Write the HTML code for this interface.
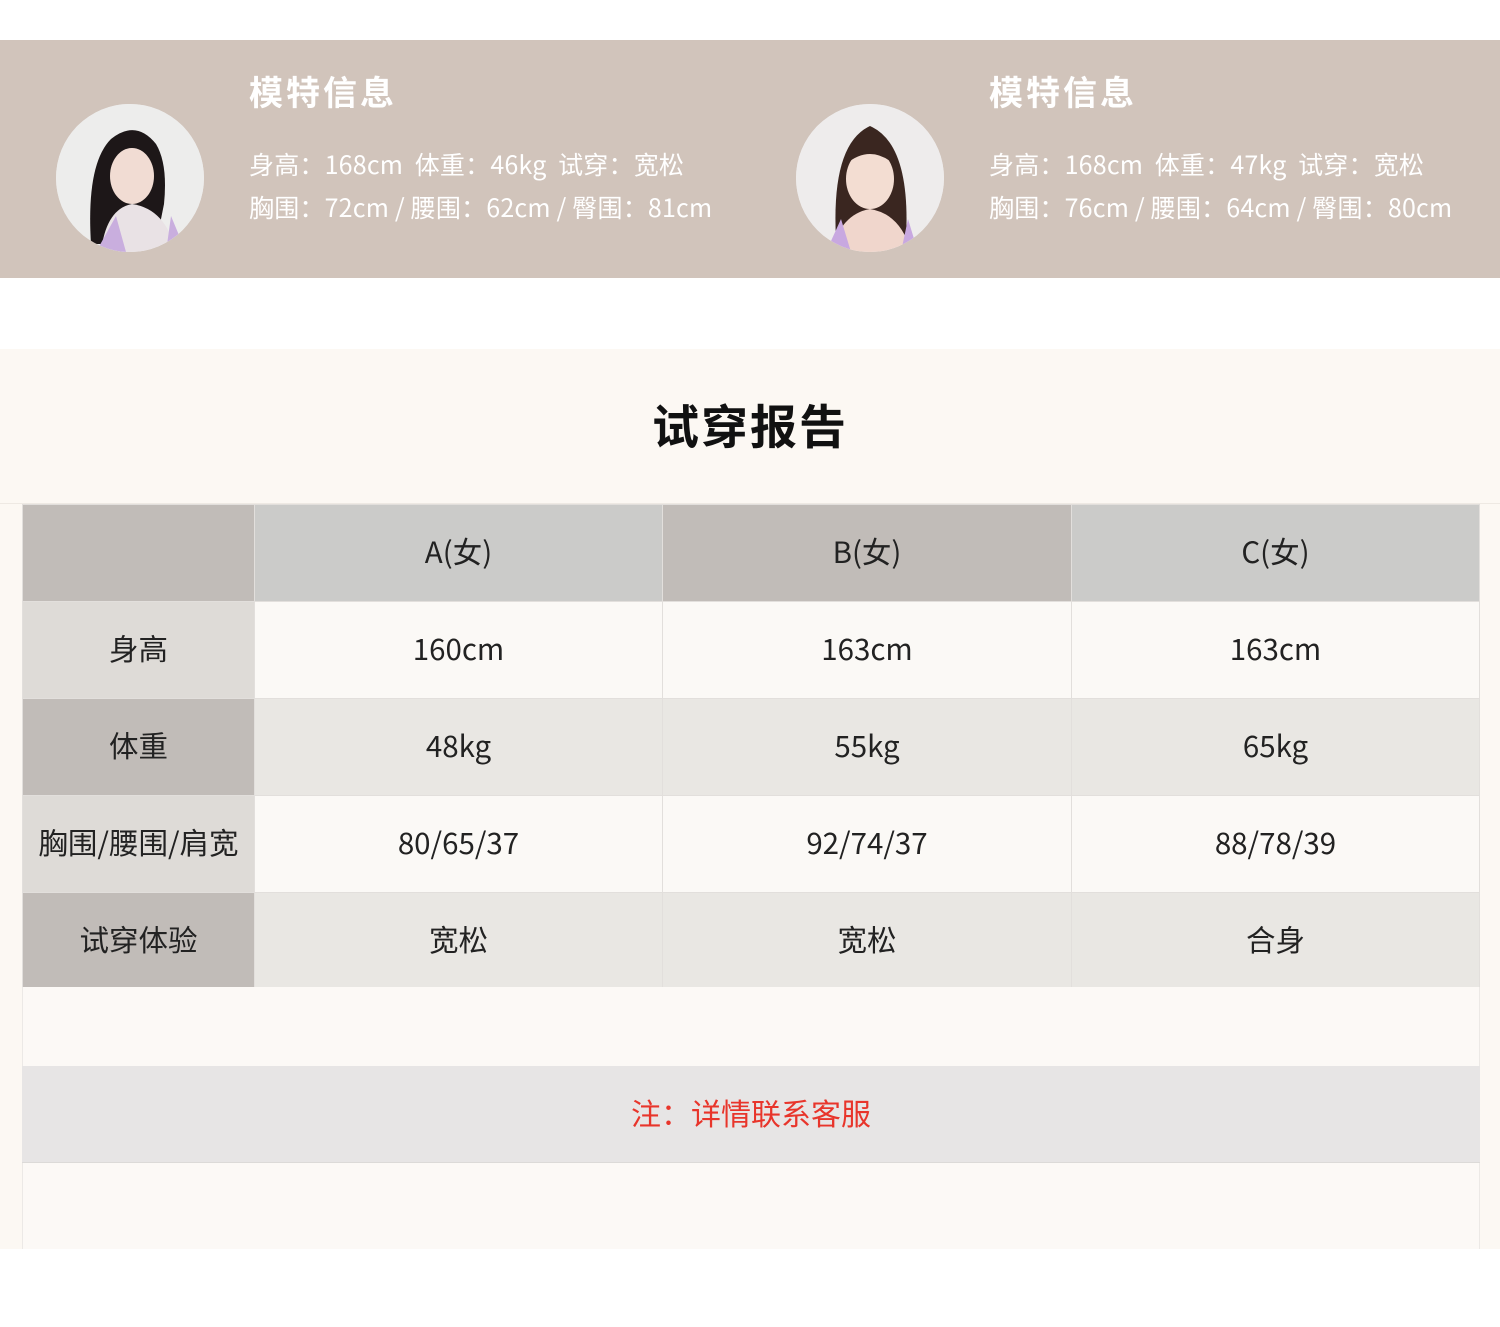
<!DOCTYPE html>
<html><head><meta charset="utf-8"><style>
*{margin:0;padding:0;box-sizing:border-box}
body{width:1500px;height:1327px;background:#fff;font-family:"Liberation Sans","Noto Sans CJK SC",sans-serif;position:relative;overflow:hidden}
.band{position:absolute;left:0;top:40px;width:1500px;height:238px;background:#d1c4bb}
.av{position:absolute;top:64px;width:148px;height:148px;border-radius:50%;overflow:hidden;background:#eceaea}
.t{position:absolute;color:#fff;font-size:34px;font-weight:bold;letter-spacing:3px;top:26px;font-family:"Noto Sans CJK SC",sans-serif}
.l{position:absolute;color:#fff;font-size:25px;letter-spacing:0.2px;white-space:nowrap;font-family:"Noto Sans CJK SC",sans-serif}
.cream{position:absolute;left:0;top:349px;width:1500px;height:900px;background:#fcf8f3}
h1{position:absolute;top:389px;left:0;width:1500px;text-align:center;font-size:47px;font-weight:bold;color:#111;letter-spacing:2px}
.hr{position:absolute;top:503px;left:0;width:1500px;height:1px;background:#eee9e3}
table{position:absolute;left:22px;top:504px;border-collapse:collapse;width:1458px}
td{border:1px solid #e2dfdc;text-align:center;font-size:29.5px;color:#222;height:97px;padding:0 0 4px;font-family:"Noto Sans CJK SC",sans-serif}
.c0{width:232px}.c1{width:408px}.c2{width:409px}
.foot{position:absolute;left:22px;width:1458px}
</style></head><body>
<div class="band">
 <div class="av" style="left:56px"><svg width="148" height="148" viewBox="0 0 148 148"><rect width="148" height="148" fill="#ededec"/><path d="M35 140 Q30 60 55 35 Q80 15 100 40 Q112 60 108 100 L100 140Z" fill="#1d1718"/><ellipse cx="76" cy="72" rx="22" ry="28" fill="#f1dcd3"/><path d="M45 148 Q50 105 76 100 Q110 105 120 148Z" fill="#e9e2e5"/><path d="M40 148 L60 112 L70 148Z M110 148 L115 112 L130 148Z" fill="#c9aede"/></svg></div>
 <div class="t" style="left:249px">模特信息</div>
 <div class="l" style="left:249px;top:106px">身高：168cm &nbsp;体重：46kg &nbsp;试穿：宽松</div>
 <div class="l" style="left:249px;top:149px">胸围：72cm / 腰围：62cm / 臀围：81cm</div>
 <div class="av" style="left:796px"><svg width="148" height="148" viewBox="0 0 148 148"><rect width="148" height="148" fill="#eeecec"/><path d="M40 135 Q35 40 74 22 Q115 40 110 135Z" fill="#3a2620"/><ellipse cx="74" cy="75" rx="24" ry="30" fill="#f3ddd2"/><path d="M50 60 Q74 40 98 60 L98 50 Q74 28 50 50Z" fill="#3a2620"/><path d="M35 148 Q45 110 74 105 Q105 110 115 148Z" fill="#f0d6cc"/><path d="M30 148 L45 115 L55 148Z M105 148 L112 115 L122 148Z" fill="#c8a8e0"/></svg></div>
 <div class="t" style="left:989px">模特信息</div>
 <div class="l" style="left:989px;top:106px">身高：168cm &nbsp;体重：47kg &nbsp;试穿：宽松</div>
 <div class="l" style="left:989px;top:149px">胸围：76cm / 腰围：64cm / 臀围：80cm</div>
</div>
<div class="cream"></div>
<h1>试穿报告</h1>
<div class="hr"></div>
<table>
<tr><td class="c0" style="background:#c1bcb8"></td><td class="c1" style="background:#cbcbc9">A(女)</td><td class="c2" style="background:#c1bcb8">B(女)</td><td style="background:#cbcbc9">C(女)</td></tr>
<tr style="background:#fbf9f6"><td style="background:#dedbd7">身高</td><td>160cm</td><td>163cm</td><td>163cm</td></tr>
<tr style="background:#e9e7e3"><td style="background:#c1bcb8">体重</td><td>48kg</td><td>55kg</td><td>65kg</td></tr>
<tr style="background:#fbf9f6"><td style="background:#dedbd7">胸围/腰围/肩宽</td><td>80/65/37</td><td>92/74/37</td><td>88/78/39</td></tr>
<tr style="background:#e9e7e3"><td style="background:#c1bcb8">试穿体验</td><td>宽松</td><td>宽松</td><td>合身</td></tr>
</table>
<div class="foot" style="top:987px;height:262px;background:#fcf9f6;border-left:1px solid #ece9e6;border-right:1px solid #ece9e6"></div>
<div class="foot" style="top:1066px;height:97px;background:#e7e5e5;border-bottom:1px solid #dcdad8;text-align:center;line-height:92px;font-size:30px;color:#e8352b;font-family:'Noto Sans CJK SC',sans-serif">注：详情联系客服</div>
</body></html>
